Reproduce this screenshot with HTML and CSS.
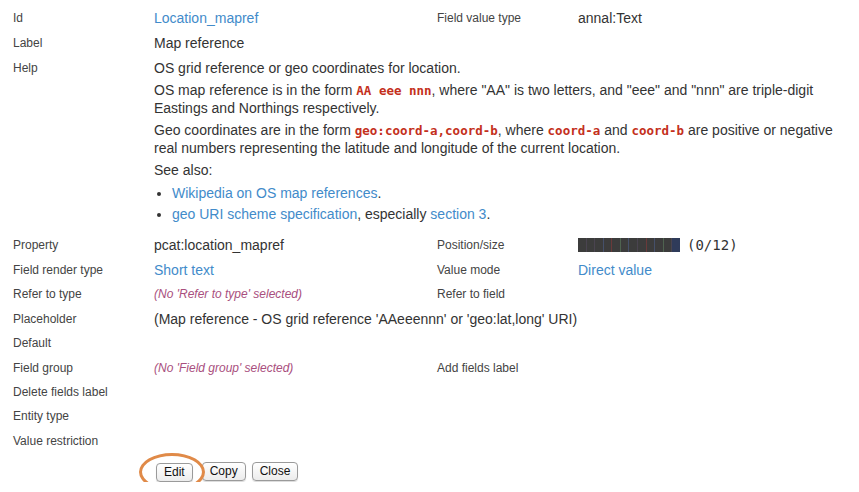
FILE: index.html
```html
<!DOCTYPE html>
<html>
<head>
<meta charset="utf-8">
<link rel="stylesheet" href="styles.css">
</head>
<body>
<div class="view">
  <div class="row">
    <div class="lbl">Id</div>
    <div class="val"><a href="#">Location_mapref</a></div>
    <div class="lbl">Field value type</div>
    <div class="val">annal:Text</div>
  </div>
  <div class="row">
    <div class="lbl">Label</div>
    <div class="val wide">Map reference</div>
  </div>
  <div class="row help">
    <div class="lbl">Help</div>
    <div class="val wide">
      <p>OS grid reference or geo coordinates for location.</p>
      <p>OS map reference is in the form <code>AA eee nnn</code>, where "AA" is two letters, and "eee" and "nnn" are triple-digit Eastings and Northings respectively.</p>
      <p>Geo coordinates are in the form <code>geo:coord-a,coord-b</code>, where <code>coord-a</code> and <code>coord-b</code> are positive or negative real numbers representing the latitude and longitude of the current location.</p>
      <p>See also:</p>
      <ul>
        <li><a href="#">Wikipedia on OS map references</a>.</li>
        <li><a href="#">geo URI scheme specification</a>, especially <a href="#">section 3</a>.</li>
      </ul>
    </div>
  </div>
  <div class="row prop">
    <div class="lbl">Property</div>
    <div class="val">pcat:location_mapref</div>
    <div class="lbl">Position/size</div>
    <div class="val pos"><span class="bar"><i></i><i></i><i></i><i></i><i></i><i></i><i></i><i></i><i></i><i></i><i></i><i></i></span><span class="mono">(0/12)</span></div>
  </div>
  <div class="row">
    <div class="lbl">Field render type</div>
    <div class="val"><a href="#">Short text</a></div>
    <div class="lbl">Value mode</div>
    <div class="val"><a href="#">Direct value</a></div>
  </div>
  <div class="row">
    <div class="lbl">Refer to type</div>
    <div class="val none">(No 'Refer to type' selected)</div>
    <div class="lbl">Refer to field</div>
    <div class="val"></div>
  </div>
  <div class="row">
    <div class="lbl">Placeholder</div>
    <div class="val wide">(Map reference - OS grid reference 'AAeeennn' or 'geo:lat,long' URI)</div>
  </div>
  <div class="row">
    <div class="lbl">Default</div>
    <div class="val wide"></div>
  </div>
  <div class="row">
    <div class="lbl">Field group</div>
    <div class="val none">(No 'Field group' selected)</div>
    <div class="lbl">Add fields label</div>
    <div class="val"></div>
  </div>
  <div class="row">
    <div class="lbl">Delete fields label</div>
    <div class="val wide"></div>
  </div>
  <div class="row">
    <div class="lbl">Entity type</div>
    <div class="val wide"></div>
  </div>
  <div class="row">
    <div class="lbl">Value restriction</div>
    <div class="val wide"></div>
  </div>
  <div class="buttons">
    <span class="hl"><button class="btn">Edit</button><span class="ring"></span></span>
    <button class="btn copy">Copy</button>
    <button class="btn">Close</button>
  </div>
</div>
</body>
</html>
```
FILE: styles.css
```css
html, body {
  margin: 0;
  padding: 0;
  background: #fff;
}
body {
  font-family: "Liberation Sans", Arial, Helvetica, sans-serif;
  color: #333;
}
.view {
  padding: 6px 10px 0 13px;
}
.row {
  display: grid;
  grid-template-columns: 141px 283px 141px 1fr;
  min-height: 24.4px;
  align-items: center;
}
.lbl {
  font-size: 12px;
  color: #444;
  line-height: 18px;
}
.val {
  font-size: 14px;
  line-height: 18px;
  color: #333;
}
.wide {
  grid-column: 2 / 5;
}
a {
  color: #428bca;
  text-decoration: none;
}
.help {
  align-items: start;
  padding: 4px 0 7px;
}
.help p {
  margin: 0 0 4px;
}
.help ul {
  margin: 0;
  padding: 0 0 0 18px;
}
.help li {
  line-height: 21px;
}
code {
  font-family: "DejaVu Sans Mono", "Liberation Mono", monospace;
  font-weight: bold;
  font-size: 12.5px;
  line-height: 1;
  color: #c4301c;
}
.prop {
  min-height: 26px;
}
.pos {
  display: flex;
  align-items: center;
}
.bar {
  display: flex;
  width: 102px;
  height: 14px;
  background: #3c3c3c;
  margin-right: 7px;
}
.bar i {
  flex: 1;
  border-right: 1px solid #4a4450;
}
.bar i:nth-child(3n) { border-right-color: #45506a; }
.bar i:nth-child(4n) { border-right-color: #6a3a3a; }
.bar i:nth-child(5n) { border-right-color: #4f6350; }
.bar i:last-child { border-right: none; background: #2f3b5a; }
.mono {
  font-family: "DejaVu Sans Mono", "Liberation Mono", monospace;
  font-size: 14px;
  line-height: 18px;
  color: #333;
}
.none {
  font-size: 12px;
  font-style: italic;
  color: #a94f7e;
}
.buttons {
  display: flex;
  align-items: center;
  padding: 9px 0 0 143px;
}
.hl {
  position: relative;
  display: inline-block;
  margin-right: 9px;
}
.btn {
  margin: 0;
  font-family: "Liberation Sans", Arial, sans-serif;
  font-size: 12px;
  color: #111;
  height: 19px;
  padding: 0 7px;
  border: 1px solid #9a9a9a;
  border-radius: 4px;
  background: linear-gradient(#ffffff, #ececec);
  box-shadow: 0 1px 1px rgba(0,0,0,0.15);
  line-height: 17px;
}
.copy {
  margin-right: 6px;
}
.ring {
  position: absolute;
  left: -17px;
  top: -9px;
  width: 60px;
  height: 32px;
  border: 3px solid #e08a48;
  border-radius: 50%;
  pointer-events: none;
}
```
